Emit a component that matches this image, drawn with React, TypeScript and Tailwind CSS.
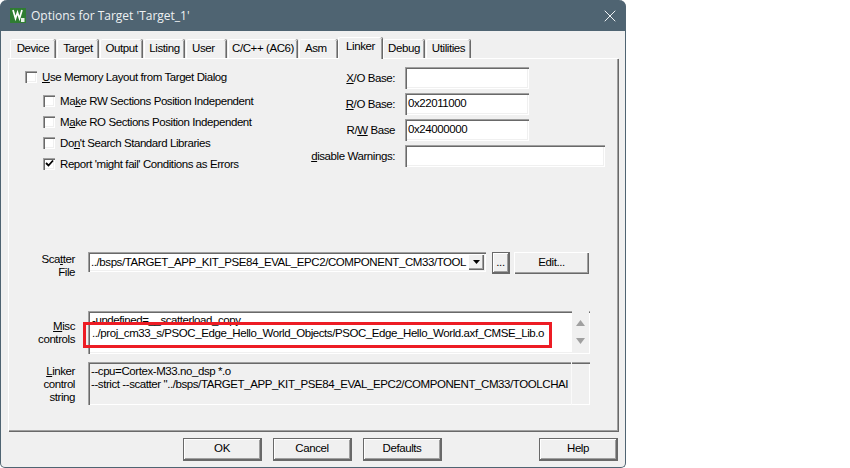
import React from "react";
import { X } from "lucide-react";

const raised =
  "bg-[#f0f0f0] shadow-[inset_1px_1px_0_#ffffff,inset_-1px_-1px_0_#696969,inset_-2px_-2px_0_#a0a0a0]";
const dialogBtn =
  "bg-[#f0f0f0] border border-[#696969] border-r-2 border-b-2 shadow-[inset_1px_1px_0_#ffffff,inset_-1px_-1px_0_#a0a0a0] flex items-center justify-center";
const sunken =
  "shadow-[inset_1px_1px_0_#a0a0a0,inset_2px_2px_0_#696969,inset_-1px_-1px_0_#ffffff,inset_-2px_-2px_0_#f0f0f0]";

const Tab = ({ label, w, active, left }: { label: string; w: string; active?: boolean; left?: boolean }) => (
  <div
    className={`${w} flex items-center ${left ? "justify-start pl-[5px]" : "justify-center"} rounded-t-[2px] border-t border-l border-white shadow-[inset_-1px_0_0_#a0a0a0,1px_0_0_#696969] ${
      active ? "h-[22px] pb-[3px] -mx-[1px] z-10 bg-[#f0f0f0] mb-[-1px]" : "h-[19px] bg-[#f0f0f0]"
    }`}
  >
    {label}
  </div>
);

const Check = ({ children, checked, top }: { children: React.ReactNode; checked?: boolean; top?: boolean }) => (
  <div className={`flex items-center h-[13px] ${top ? "gap-[5px]" : "gap-[5px] ml-[18px]"}`}>
    <div className={`w-[12px] h-[12px] bg-white ${sunken} flex items-center justify-center`}>
      {checked && (
        <svg width="9" height="9" viewBox="0 0 9 9">
          <path d="M1 4 L3.5 6.5 L8 1.5" fill="none" stroke="#000" strokeWidth="1.8" />
        </svg>
      )}
    </div>
    <span className="pt-[2px]">{children}</span>
  </div>
);

const BaseField = ({ label, value, wide }: { label: React.ReactNode; value?: string; wide?: boolean }) => (
  <div className="flex items-center h-[22px] gap-[10px]">
    <div className="w-[95px] text-right pt-[2px]">{label}</div>
    <div className={`${wide ? "w-[200px]" : "w-[124px]"} h-[22px] bg-white ${sunken} pl-[3px] pt-[2px]`}>{value}</div>
  </div>
);

const SideLabel = ({ children }: { children: React.ReactNode }) => (
  <div className="w-[40px] text-right leading-[13px] shrink-0">{children}</div>
);

export default function App() {
  return (
    <div className="w-[850px] h-[468px] bg-white overflow-hidden font-['Liberation_Sans',sans-serif] text-[11.5px] text-black tracking-[-0.42px]">
      <div className="w-[626px] h-[468px] bg-[#f0f0f0] rounded-t-[7px] rounded-b-[5px] border-x border-b border-[#4f6472] flex flex-col relative">
        {/* title bar */}
        <div className="h-[31px] bg-[#4f6472] -mx-[1px] rounded-t-[7px] flex items-center shrink-0">
          <svg className="ml-[10px]" width="16" height="15" viewBox="0 0 16 15">
            <rect width="16" height="15" fill="#2f7d32" />
            <path d="M3 2 L5.5 10.5 L7.5 4.5 L9.5 10.5 L12 2" fill="none" stroke="#fff" strokeWidth="1.7" />
            <rect x="11" y="10" width="3.5" height="4" fill="#e8f0e8" />
          </svg>
          <span className="ml-[5px] font-['Open_Sans',sans-serif] text-[12px] tracking-normal text-[#eef1f3]">
            Options for Target 'Target_1'
          </span>
          <X className="ml-auto mr-[6px] text-[#f0f3f5]" size={20} strokeWidth={1.2} />
        </div>

        {/* tabs */}
        <div className="h-[27px] shrink-0 pl-[9px] flex items-end gap-[2px] relative">
          <Tab label="Device" w="w-[45px]" />
          <Tab label="Target" w="w-[41px]" />
          <Tab label="Output" w="w-[42px]" />
          <Tab label="Listing" w="w-[40px]" />
          <Tab label="User" w="w-[40px]" left />
          <Tab label="C/C++ (AC6)" w="w-[69px]" />
          <Tab label="Asm" w="w-[38px]" left />
          <Tab label="Linker" w="w-[44px]" active />
          <Tab label="Debug" w="w-[41px]" />
          <Tab label="Utilities" w="w-[44px]" />
        </div>

        {/* panel */}
        <div className="ml-[7px] w-[610px] h-[373px] shrink-0 border-t border-l border-white shadow-[inset_-1px_-1px_0_#a0a0a0,1px_1px_0_#696969] flex flex-col">
          <div className="flex h-[181px] shrink-0">
            <div className="w-[291px] pl-[16px] pt-[11px] flex flex-col">
              <Check top>
                <u>U</u>se Memory Layout from Target Dialog
              </Check>
              <div className="mt-[11px] flex flex-col gap-[8px]">
                <Check>
                  Ma<u>k</u>e RW Sections Position Independent
                </Check>
                <Check>
                  M<u>a</u>ke RO Sections Position Independent
                </Check>
                <Check>
                  Do<u>n</u>'t Search Standard Libraries
                </Check>
                <Check checked>
                  Report 'mi<u>g</u>ht fail' Conditions as Errors
                </Check>
              </div>
            </div>
            <div className="pt-[8px] flex flex-col gap-[4px]">
              <BaseField label={<><u>X</u>/O Base:</>} />
              <BaseField label={<><u>R</u>/O Base:</>} value="0x22011000" />
              <BaseField label={<>R/<u>W</u> Base</>} value="0x24000000" />
              <BaseField label={<><u>d</u>isable Warnings:</>} wide />
            </div>
          </div>

          {/* scatter file */}
          <div className="flex mt-[12px] h-[30px] shrink-0 pl-[26px] gap-[13px]">
            <SideLabel>
              <div className="pt-[1px]">
                Sca<u>t</u>ter
                <br />
                File
              </div>
            </SideLabel>
            <div className="flex items-start">
              <div className={`w-[398px] h-[20px] bg-white ${sunken} pl-[3px] pt-[2px] flex relative whitespace-nowrap`}>
                <div className="w-[376px] overflow-hidden">../bsps/TARGET_APP_KIT_PSE84_EVAL_EPC2/COMPONENT_CM33/TOOL</div>
                <div className={`absolute right-[2px] top-[2px] w-[16px] h-[16px] ${raised} flex items-center justify-center`}>
                  <svg width="7" height="4" viewBox="0 0 7 4">
                    <path d="M0 0 H7 L3.5 4 Z" fill="#000" />
                  </svg>
                </div>
              </div>
              <div className={`ml-[6px] w-[18px] h-[22px] ${dialogBtn}`}>...</div>
              <div className={`ml-[4px] w-[75px] h-[22px] ${raised} flex items-center justify-center`}>Edit...</div>
            </div>
          </div>

          {/* misc controls */}
          <div className="flex mt-[29px] h-[43px] shrink-0 pl-[26px] gap-[13px] items-start">
            <SideLabel>
              <div className="pt-[9px]">
                <u>M</u>isc
                <br />
                controls
              </div>
            </SideLabel>
            <div className={`w-[502px] h-[43px] bg-white ${sunken} flex whitespace-nowrap`}>
              <div className="w-[484px] pl-[4px] pt-[3px] leading-[13px]">
                <div>-undefined=__scatterload_copy</div>
                <div>../proj_cm33_s/PSOC_Edge_Hello_World_Objects/PSOC_Edge_Hello_World.axf_CMSE_Lib.o</div>
              </div>
              <div className="w-[17px] mb-[1px] bg-[#f0f0f0] flex flex-col items-center justify-between py-[9px]">
                <svg width="9" height="6" viewBox="0 0 9 6"><path d="M4.5 0 L9 6 H0 Z" fill="#a0a0a0" /></svg>
                <svg width="9" height="6" viewBox="0 0 9 6"><path d="M0 0 H9 L4.5 6 Z" fill="#a0a0a0" /></svg>
              </div>
            </div>
          </div>

          {/* linker control string */}
          <div className="flex mt-[8px] h-[43px] shrink-0 pl-[26px] gap-[13px] items-start">
            <SideLabel>
              <div className="pt-[3px]">
                <u>L</u>inker
                <br />
                control
                <br />
                string
              </div>
            </SideLabel>
            <div className={`w-[502px] h-[43px] ${sunken} flex whitespace-nowrap`}>
              <div className="w-[484px] pl-[3px] pt-[3px] leading-[13px] border-r border-[#fafafa]">
                <div>--cpu=Cortex-M33.no_dsp *.o</div>
                <div className="w-[480px] overflow-hidden">--strict --scatter "../bsps/TARGET_APP_KIT_PSE84_EVAL_EPC2/COMPONENT_CM33/TOOLCHAI</div>
              </div>
            </div>
          </div>
        </div>

        {/* dialog buttons */}
        <div className="flex mt-[7px] pl-[182px] h-[23px]">
          <div className={`w-[79px] ${dialogBtn}`}>OK</div>
          <div className={`w-[79px] ml-[11px] ${dialogBtn}`}>Cancel</div>
          <div className={`w-[79px] ml-[11px] ${dialogBtn}`}>Defaults</div>
          <div className={`w-[79px] ml-[97px] ${dialogBtn}`}>Help</div>
        </div>

        {/* annotation box */}
        <div className="absolute left-[82px] top-[322px] w-[469px] h-[26px] border-[3px] border-[#ed1c24]" />
      </div>
    </div>
  );
}
